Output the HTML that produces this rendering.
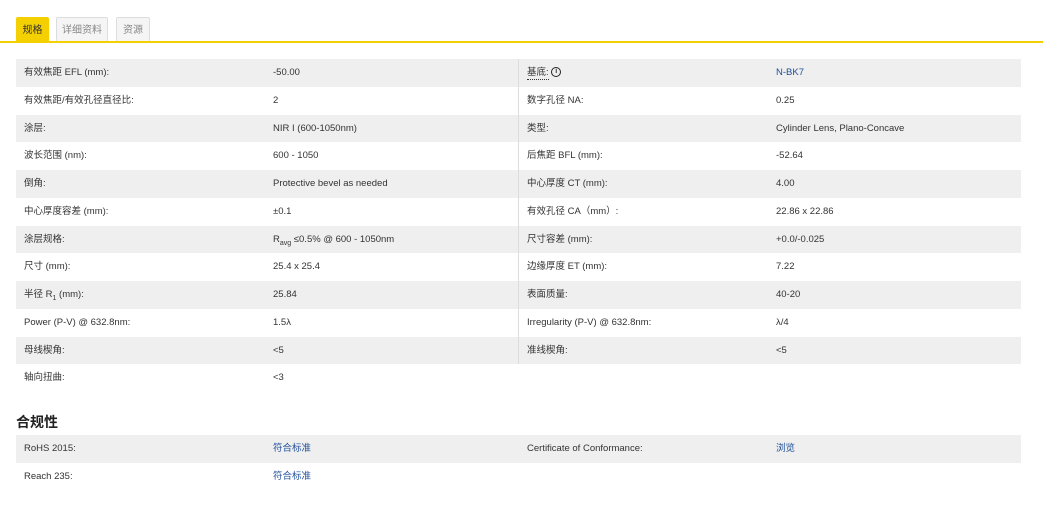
<!DOCTYPE html>
<html><head><meta charset="utf-8"><style>
*{margin:0;padding:0;box-sizing:border-box}
body{width:1043px;height:519px;background:#fff;font-family:"Liberation Sans","Noto Sans CJK SC",sans-serif;font-size:9.5px;color:#333;position:relative;overflow:hidden}
.tabs{position:absolute;left:16px;top:17px;height:25px}
.tab{position:absolute;top:0;height:25px;border:1px solid #ddd;border-bottom:none;background:#f5f5f5;color:#888;font-size:10px;line-height:26px;text-align:center;border-radius:2px 2px 0 0}
.line{position:absolute;left:0;top:41px;width:1043px;height:2px;background:#f5d000}
.tbl{position:absolute;width:502px}
.row{height:27.75px;position:relative;line-height:28.5px}
.row.g{background:#efefef}
.k{position:absolute;left:8px}
.v{position:absolute;left:257px}
a{color:#1f4f9a;text-decoration:none}
h3{position:absolute;left:16px;top:412px;font-size:14px;font-weight:bold;color:#222}
.div{position:absolute;left:518px;top:59px;width:1px;height:305px;background:#ddd}
</style></head><body>
<div class="tabs">
<div class="tab" style="left:0;width:33px;background:#f5d000;border-color:#f5d000;color:#333">规格</div>
<div class="tab" style="left:40px;width:52px">详细资料</div>
<div class="tab" style="left:100px;width:34px">资源</div>
</div>
<div class="line"></div>
<div class="tbl" style="left:16px;top:59px">
<div class="row g"><span class="k">有效焦距 EFL (mm):</span><span class="v">-50.00</span></div>
<div class="row"><span class="k">有效焦距/有效孔径直径比:</span><span class="v">2</span></div>
<div class="row g"><span class="k">涂层:</span><span class="v">NIR I (600-1050nm)</span></div>
<div class="row"><span class="k">波长范围 (nm):</span><span class="v">600 - 1050</span></div>
<div class="row g"><span class="k">倒角:</span><span class="v">Protective bevel as needed</span></div>
<div class="row"><span class="k">中心厚度容差 (mm):</span><span class="v">±0.1</span></div>
<div class="row g"><span class="k">涂层规格:</span><span class="v">R<sub style="font-size:7px;line-height:0">avg</sub> ≤0.5% @ 600 - 1050nm</span></div>
<div class="row"><span class="k">尺寸 (mm):</span><span class="v">25.4 x 25.4</span></div>
<div class="row g"><span class="k">半径 R<sub style="font-size:7px;line-height:0">1</sub> (mm):</span><span class="v">25.84</span></div>
<div class="row"><span class="k">Power (P-V) @ 632.8nm:</span><span class="v">1.5λ</span></div>
<div class="row g"><span class="k">母线楔角:</span><span class="v">&lt;5</span></div>
<div class="row"><span class="k">轴向扭曲:</span><span class="v">&lt;3</span></div>
</div>
<div class="div"></div>
<div class="tbl" style="left:519px;top:59px;width:502px">
<div class="row g"><span class="k"><span style="border-bottom:1px dotted #333;padding-bottom:1px">基底:</span> <b style="display:inline-block;vertical-align:middle;width:10px;height:10px;border:1.3px solid #222;border-radius:50%;font-size:7px;line-height:8px;text-align:center">i</b></span><span class="v"><a>N-BK7</a></span></div>
<div class="row"><span class="k">数字孔径 NA:</span><span class="v">0.25</span></div>
<div class="row g"><span class="k">类型:</span><span class="v">Cylinder Lens, Plano-Concave</span></div>
<div class="row"><span class="k">后焦距 BFL (mm):</span><span class="v">-52.64</span></div>
<div class="row g"><span class="k">中心厚度 CT (mm):</span><span class="v">4.00</span></div>
<div class="row"><span class="k">有效孔径 CA（mm）:</span><span class="v">22.86 x 22.86</span></div>
<div class="row g"><span class="k">尺寸容差 (mm):</span><span class="v">+0.0/-0.025</span></div>
<div class="row"><span class="k">边缘厚度 ET (mm):</span><span class="v">7.22</span></div>
<div class="row g"><span class="k">表面质量:</span><span class="v">40-20</span></div>
<div class="row"><span class="k">Irregularity (P-V) @ 632.8nm:</span><span class="v">λ/4</span></div>
<div class="row g"><span class="k">准线楔角:</span><span class="v">&lt;5</span></div>
</div>
<h3>合规性</h3>
<div class="tbl" style="left:16px;top:435px;width:1005px">
<div class="row g"><span class="k">RoHS 2015:</span><span class="v"><a>符合标准</a></span><span class="k" style="left:511px">Certificate of Conformance:</span><span class="v" style="left:760px"><a>浏览</a></span></div>
<div class="row"><span class="k">Reach 235:</span><span class="v"><a>符合标准</a></span></div>
</div>
</body></html>
